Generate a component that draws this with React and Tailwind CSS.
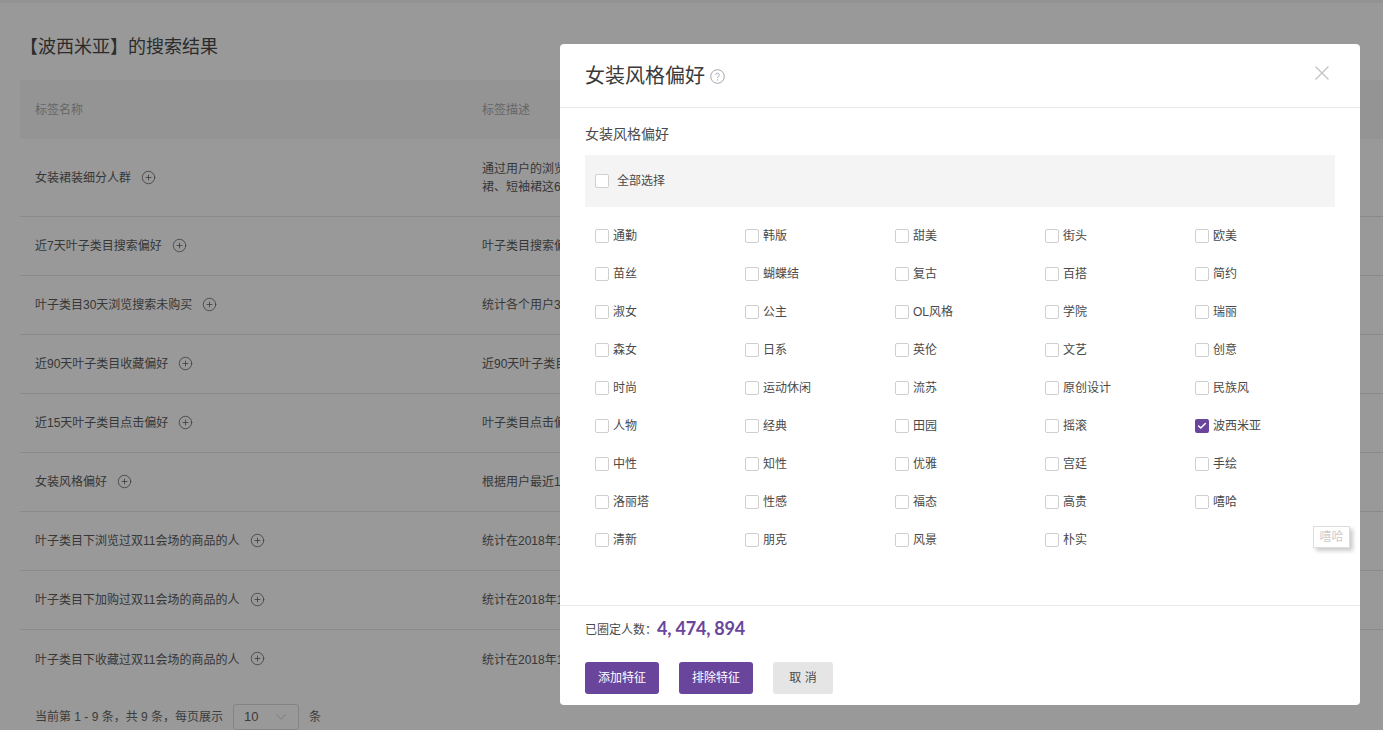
import React from "react";
import { CirclePlus, X, ChevronDown, Check } from "lucide-react";

const rows = [
  ["女装裙装细分人群", "通过用户的浏览、搜索、收藏、加购等行为，计算用户对连衣裙、半身裙、长袖裙、", "裙、短袖裙这6类裙装的偏好程度"],
  ["近7天叶子类目搜索偏好", "叶子类目搜索偏好，统计用户近7天的搜索行为"],
  ["叶子类目30天浏览搜索未购买", "统计各个用户30天内浏览搜索但未购买的类目"],
  ["近90天叶子类目收藏偏好", "近90天叶子类目收藏偏好，统计用户的收藏行为"],
  ["近15天叶子类目点击偏好", "叶子类目点击偏好，统计用户近15天的点击行为"],
  ["女装风格偏好", "根据用户最近180天的行为计算女装风格偏好"],
  ["叶子类目下浏览过双11会场的商品的人", "统计在2018年11月浏览过双11会场商品的用户"],
  ["叶子类目下加购过双11会场的商品的人", "统计在2018年11月加购过双11会场商品的用户"],
  ["叶子类目下收藏过双11会场的商品的人", "统计在2018年11月收藏过双11会场商品的用户"],
];

const options = [
  "通勤","韩版","甜美","街头","欧美",
  "苗丝","蝴蝶结","复古","百搭","简约",
  "淑女","公主","OL风格","学院","瑞丽",
  "森女","日系","英伦","文艺","创意",
  "时尚","运动休闲","流苏","原创设计","民族风",
  "人物","经典","田园","摇滚","波西米亚",
  "中性","知性","优雅","宫廷","手绘",
  "洛丽塔","性感","福态","高贵","嘻哈",
  "清新","朋克","风景","朴实",
];

function Box({ checked }) {
  return checked ? (
    <span className="w-[14px] h-[14px] rounded-[2px] bg-[#6a459c] flex items-center justify-center shrink-0">
      <Check size={10} strokeWidth={3.5} color="#ffffff" />
    </span>
  ) : (
    <span className="w-[14px] h-[14px] rounded-[2px] border border-[#cfcfcf] bg-white shrink-0" />
  );
}

export default function App() {
  return (
    <div className="relative w-[1383px] h-[730px] overflow-hidden bg-white text-[12px] text-[#5c5c5c] font-['Liberation_Sans','Noto_Sans_CJK_SC',sans-serif]">
      <div className="h-[3px] bg-[#f6f6f6]" />
      <div className="pl-5">
        <h1 className="h-[77px] flex items-center pt-[11px] text-[18px] font-normal text-[#4a4a4a]">【波西米亚】的搜索结果</h1>
        <div className="h-[59px] flex items-center bg-[#f7f7f7] text-[#aaa] pt-[1px]">
          <div className="w-[462px] pl-[15px]">标签名称</div>
          <div>标签描述</div>
        </div>
        {rows.map((r, i) => (
          <div
            key={r[0]}
            className={`flex items-center ${i === rows.length - 1 ? "" : "border-b border-[#e6e6e6]"} ${r[2] ? "h-[78px]" : "h-[59px]"}`}
          >
            <div className="w-[462px] pl-[15px] flex items-center gap-[10px]">
              <span>{r[0]}</span>
              <CirclePlus
                className={`${r[2] ? "" : "-mt-[2px]"} ${i > 5 ? "ml-[1px]" : ""}`}
                size={15}
                strokeWidth={1.2}
                color="#5c5c5c"
              />
            </div>
            <div className="w-[800px] leading-[18px]">
              <div className="whitespace-nowrap">{r[1]}</div>
              {r[2] && <div className="whitespace-nowrap">{r[2]}</div>}
            </div>
          </div>
        ))}
        <div className="flex items-center pl-[15px] h-[26px] mt-[15px] text-[#666]">
          <span>当前第 1 - 9 条，共 9 条，每页展示</span>
          <div className="ml-[10px] w-[66px] h-[26px] border border-[#ddd] rounded-[3px] flex items-center justify-between pl-[10px] pr-[8px]">
            <span className="text-[13px]">10</span>
            <ChevronDown size={18} strokeWidth={1} color="#bbb" />
          </div>
          <span className="ml-[10px]">条</span>
        </div>
      </div>

      <div className="absolute inset-0 bg-black/40" />

      <div className="absolute left-[560px] top-[44px] w-[800px] h-[661px] bg-white rounded-[4px] flex flex-col text-[#4a4a4a]">
        <div className="h-[64px] shrink-0 border-b border-[#e8e8e8] flex items-center pl-[25px] pr-[26px] pt-[1px]">
          <span className="text-[20px] text-[#3a3a3a]">女装风格偏好</span>
          <svg className="ml-[5px] mt-[1px]" width="15" height="15" viewBox="0 0 15 15" fill="none">
            <circle cx="7.5" cy="7.5" r="6.8" stroke="#a3a3b5" strokeWidth="1" />
            <path d="M5.6 6c0-1.1.8-1.8 1.9-1.8s1.9.7 1.9 1.6c0 1.4-1.9 1.5-1.9 3" stroke="#a3a3b5" strokeWidth="1" fill="none" />
            <circle cx="7.5" cy="10.9" r=".7" fill="#a3a3b5" />
          </svg>
          <X className="ml-auto -mt-[6px]" size={24} strokeWidth={1.4} color="#c4c4c4" />
        </div>
        <div className="flex-1 px-[25px]">
          <div className="h-[47px] flex items-center pt-[6px] text-[14px] text-[#4a4a4a]">女装风格偏好</div>
          <div className="h-[52px] bg-[#f4f4f4] flex items-center pl-[10px] gap-[8px]">
            <Box />
            <span>全部选择</span>
          </div>
          <div className="grid grid-cols-[repeat(5,150px)] auto-rows-[38px] pl-[10px] mt-[10px]">
            {options.map((o) => (
              <label key={o} className="flex items-center gap-[4px]">
                <Box checked={o === "波西米亚"} />
                <span>{o}</span>
              </label>
            ))}
          </div>
        </div>
        <div className="h-[100px] shrink-0 border-t border-[#e8e8e8] px-[25px]">
          <div className="h-[45px] flex items-center pt-[2px]">
            <span>已圈定人数：</span>
            <span className="text-[18px] font-bold text-[#6a459c] font-['Lato',sans-serif] -mt-[3px] tracking-[-0.2px]">4, 474, 894</span>
          </div>
          <div className="flex gap-[20px] mt-[11px]">
            <button className="w-[74px] h-[32px] rounded-[3px] bg-[#6a459c] text-white">添加特征</button>
            <button className="w-[74px] h-[32px] rounded-[3px] bg-[#6a459c] text-white">排除特征</button>
            <button className="w-[60px] h-[32px] rounded-[3px] bg-[#e5e5e5] text-[#4a4a4a]">取 消</button>
          </div>
        </div>
      </div>

      <div className="absolute left-[1313px] top-[526px] w-[37px] h-[22px] bg-white border border-[#ddd] shadow-[3px_3px_4px_rgba(0,0,0,0.2)] flex items-center justify-center text-[#ccc]">嘻哈</div>
    </div>
  );
}
